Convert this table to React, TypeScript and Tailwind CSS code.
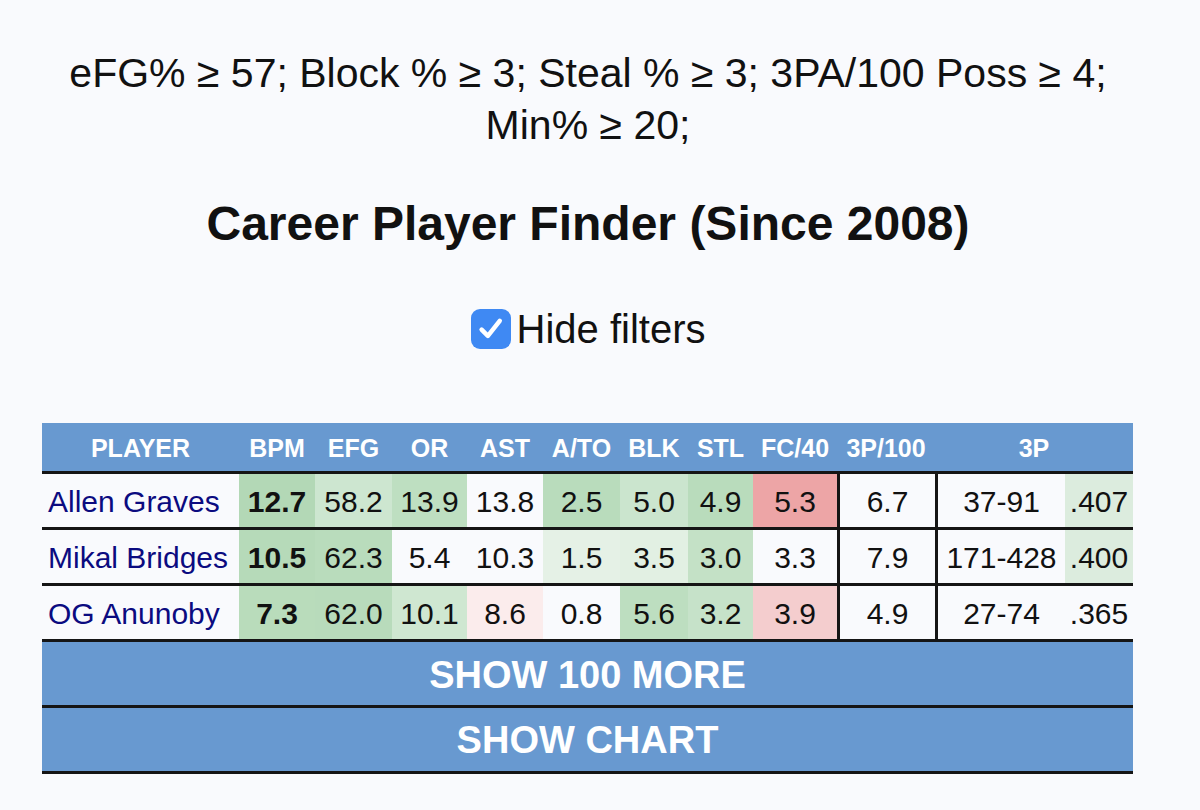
import React from "react";

type Cell = { v: string; bg: string; bold?: boolean };
type Row = { name: string; cells: Cell[]; p100: string; made: string; pct: Cell };

const W = "bg-[#f9fafd]";

const rows: Row[] = [
  {
    name: "Allen Graves",
    cells: [
      { v: "12.7", bg: "bg-[#b3d8b6]", bold: true },
      { v: "58.2", bg: "bg-[#cde6d0]" },
      { v: "13.9", bg: "bg-[#bedfc1]" },
      { v: "13.8", bg: W },
      { v: "2.5", bg: "bg-[#b9dcbc]" },
      { v: "5.0", bg: "bg-[#cbe5ce]" },
      { v: "4.9", bg: "bg-[#b9dcbc]" },
      { v: "5.3", bg: "bg-[#eda5a6]" },
    ],
    p100: "6.7",
    made: "37-91",
    pct: { v: ".407", bg: "bg-[#dcecde]" },
  },
  {
    name: "Mikal Bridges",
    cells: [
      { v: "10.5", bg: "bg-[#b6dab9]", bold: true },
      { v: "62.3", bg: "bg-[#b9dcbc]" },
      { v: "5.4", bg: W },
      { v: "10.3", bg: W },
      { v: "1.5", bg: "bg-[#e5f1e6]" },
      { v: "3.5", bg: "bg-[#e2f0e3]" },
      { v: "3.0", bg: "bg-[#c4e1c6]" },
      { v: "3.3", bg: W },
    ],
    p100: "7.9",
    made: "171-428",
    pct: { v: ".400", bg: "bg-[#dcecde]" },
  },
  {
    name: "OG Anunoby",
    cells: [
      { v: "7.3", bg: "bg-[#b9dcbb]", bold: true },
      { v: "62.0", bg: "bg-[#b8dbbb]" },
      { v: "10.1", bg: "bg-[#cfe7d1]" },
      { v: "8.6", bg: "bg-[#fbecec]" },
      { v: "0.8", bg: W },
      { v: "5.6", bg: "bg-[#bddec0]" },
      { v: "3.2", bg: "bg-[#c6e2c9]" },
      { v: "3.9", bg: "bg-[#f4cdce]" },
    ],
    p100: "4.9",
    made: "27-74",
    pct: { v: ".365", bg: W },
  },
];

const cols =
  "grid grid-cols-[197px_76px_77px_75px_76px_77px_68px_65px_84px_98px_130px_68px]";

const headers = ["PLAYER", "BPM", "EFG", "OR", "AST", "A/TO", "BLK", "STL", "FC/40", "3P/100"];

const cell = "h-[53px] pt-[2px] leading-[51px]";

export default function App() {
  return (
    <div className="min-h-[810px] w-[1200px] bg-[#f9fafd] text-[#111] font-['Liberation_Sans',Arial,sans-serif]">
      <div className="w-[1176px]">
        <div className="pt-[47px] text-center text-[41px] leading-[52px]">
          eFG% ≥ 57; Block % ≥ 3; Steal % ≥ 3; 3PA/100 Poss ≥ 4;
          <br />
          Min% ≥ 20;
        </div>
        <h1 className="mt-[45px] text-center text-[48px] leading-[56px] font-bold">
          Career Player Finder (Since 2008)
        </h1>
        <div className="mt-[51px] flex items-center justify-center gap-[6px]">
          <div className="flex h-[40px] w-[40px] items-center justify-center rounded-[9px] bg-[#3f89f3]">
            <svg width="30" height="30" viewBox="0 0 24 24" fill="none">
              <path
                d="M4.5 12.5 L9.5 17.5 L19 5.5"
                stroke="white"
                strokeWidth="3.6"
                strokeLinecap="round"
                strokeLinejoin="round"
              />
            </svg>
          </div>
          <span className="text-[40px] leading-[52px]">Hide filters</span>
        </div>
      </div>

      <div className="ml-[42px] mt-[68px] w-[1091px]">
        <div className={`${cols} h-[48px] items-center bg-[#6899d0] pt-[3px] text-[25px] font-bold text-white`}>
          {headers.map((h) => (
            <div key={h} className="text-center whitespace-nowrap">
              {h}
            </div>
          ))}
          <div className="col-span-2 text-center">3P</div>
        </div>
        {rows.map((r) => (
          <div key={r.name} className={`${cols} border-t-[3px] border-[#151515] text-[30px]`}>
            <div className={`${cell} bg-[#f9fafd] pl-[6px] text-[#0b0b80] whitespace-nowrap`}>{r.name}</div>
            {r.cells.map((c, i) => (
              <div key={i} className={`${cell} ${c.bg} text-center ${c.bold ? "font-bold" : ""}`}>
                {c.v}
              </div>
            ))}
            <div className={`${cell} border-l-[3px] border-[#151515] bg-[#f9fafd] text-center`}>{r.p100}</div>
            <div className={`${cell} border-l-[3px] border-[#151515] bg-[#f9fafd] text-center`}>{r.made}</div>
            <div className={`${cell} ${r.pct.bg} text-center`}>{r.pct.v}</div>
          </div>
        ))}
        <button className="block h-[66px] w-full border-t-[3px] border-[#151515] bg-[#6899d0] pt-[3px] text-center text-[38px] font-bold text-white">
          SHOW 100 MORE
        </button>
        <button className="block h-[69px] w-full border-y-[3px] border-[#151515] bg-[#6899d0] pt-[2px] text-center text-[38px] font-bold text-white">
          SHOW CHART
        </button>
      </div>
    </div>
  );
}
